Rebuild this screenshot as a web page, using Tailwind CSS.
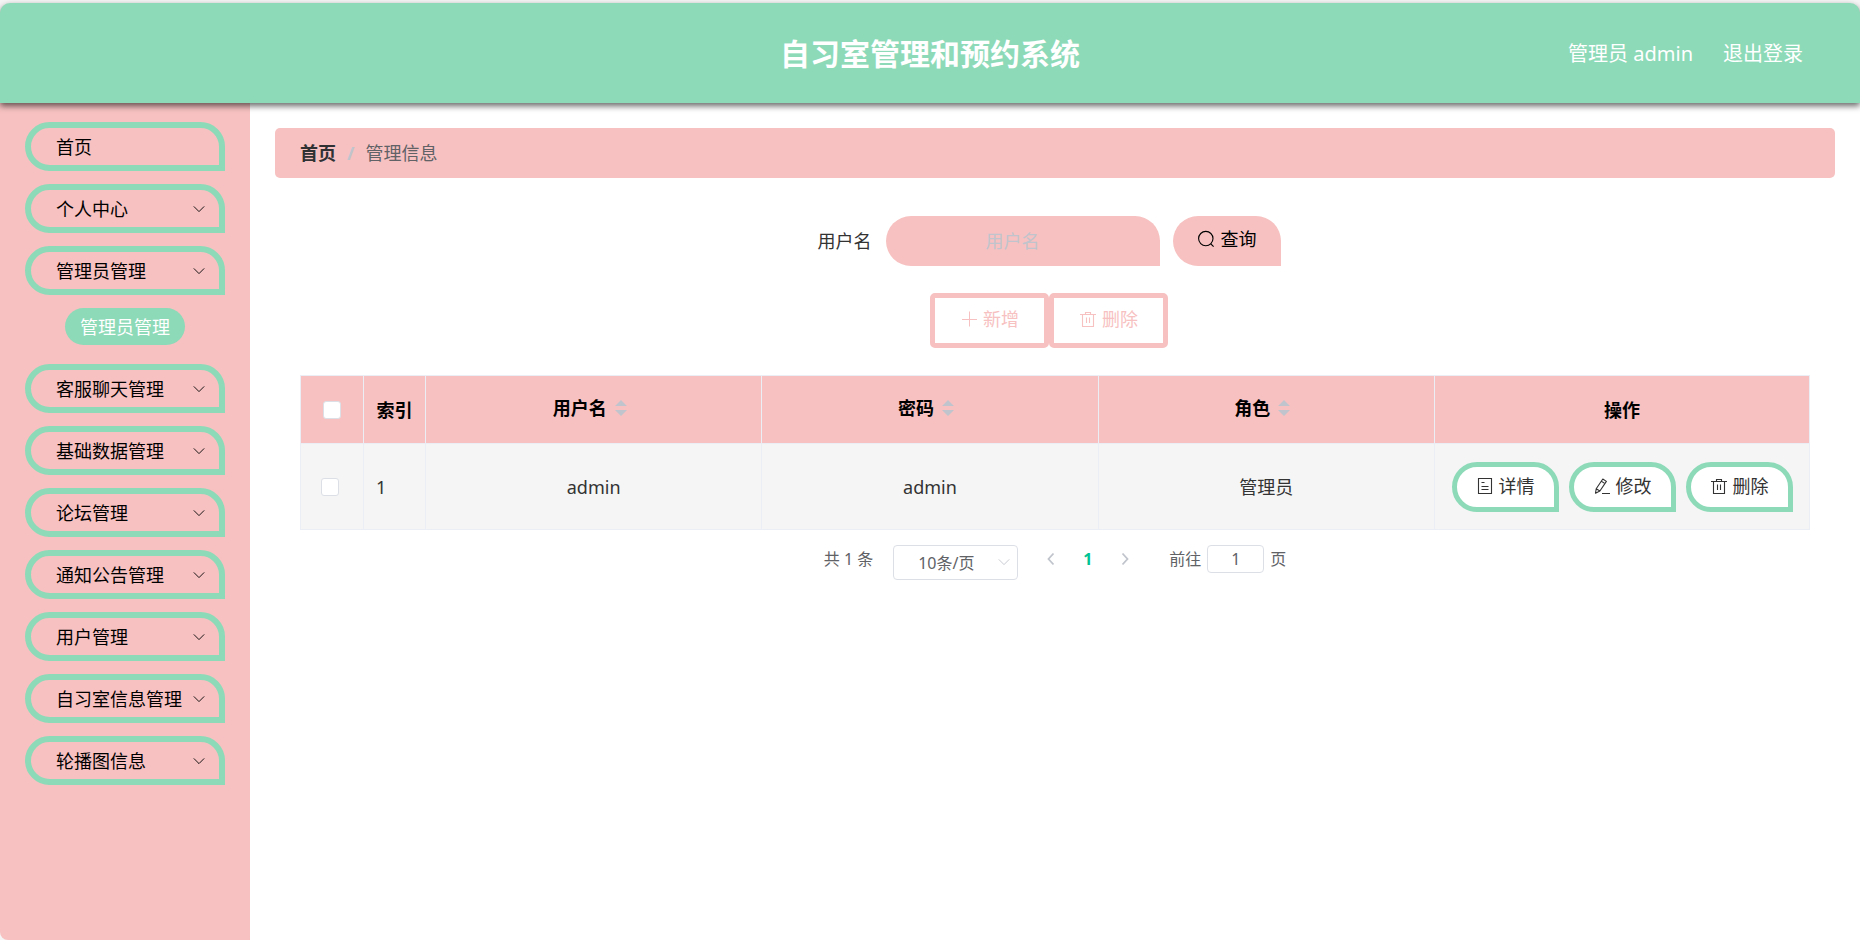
<!DOCTYPE html>
<html lang="zh-CN">

<head>
    <meta charset="UTF-8">
    <meta name="viewport" content="width=device-width, initial-scale=1.0">
    <title>自习室管理和预约系统</title>
    <script src="https://cdn.jsdelivr.net/npm/@tailwindcss/browser@4"></script>
</head>

<body class="bg-[#f5f5f5] font-['Noto_Sans','Noto_Sans_CJK_SC',sans-serif] text-[#333333]">
    <!-- Icons -->
    <svg class="hidden">
        <symbol id="arrow-down" viewBox="0 0 12 12">
            <path d="M0.8 3.4 L6 8.6 L11.2 3.4" fill="none" stroke="currentColor" stroke-width="0.9" />
        </symbol>
        <symbol id="search" viewBox="0 0 18 18">
            <circle cx="8.8" cy="8.6" r="7.2" fill="none" stroke="currentColor" stroke-width="1.1" />
            <path d="M13.8 13.8 L16.6 16.6" fill="none" stroke="currentColor" stroke-width="1.2" />
        </symbol>
        <symbol id="plus" viewBox="0 0 18 18">
            <path d="M9.5 1.5 V16.5 M2 9.5 H17" fill="none" stroke="currentColor" />
        </symbol>
        <symbol id="delete" viewBox="0 0 18 18">
            <path d="M1 4.5 H17 M6.5 4.5 V2.5 H11.5 V4.5 M3.5 4.5 V16.5 H14.5 V4.5 M7.5 7.5 V13 M10.5 7.5 V13" fill="none" stroke="currentColor" stroke-width="1.1" />
        </symbol>
        <symbol id="document" viewBox="0 0 18 18">
            <path d="M2.5 1.5 H15.5 V16.5 H2.5 Z M5.5 5.5 H8.5 M5.5 9.5 H12.5 M5.5 12.5 H12.5" fill="none" stroke="currentColor" stroke-width="1.1" />
        </symbol>
        <symbol id="edit" viewBox="0 0 18 18">
            <path d="M9.8 2 L13.4 4.4 L6.9 14 L2.5 16.2 L3.2 11.8 Z M8.4 4.2 L12 6.6 M3.2 11.8 L6.9 14 M9 16.5 H17" fill="none" stroke="currentColor" stroke-width="1.1" stroke-linejoin="round" />
        </symbol>
        <symbol id="carets" viewBox="0 0 12 16">
            <path d="M6 0 L12 6 H0 Z M0 10 H12 L6 16 Z" fill="currentColor" />
        </symbol>
    </svg>

    <div class="flex min-h-screen flex-col pt-[3px]">
        <header class="relative z-10 grid h-[100px] grid-cols-3 items-center rounded-t-[10px] bg-[#8ddab8] px-[57px] pt-0.5 text-xl text-white shadow-[0_3px_6px_rgba(0,0,0,0.6)]">
            <h1 class="col-start-2 text-center text-3xl font-bold">自习室管理和预约系统</h1>
            <div class="flex justify-end gap-[30px]">
                <span>管理员 admin</span>
                <a href="#">退出登录</a>
            </div>
        </header>

        <div class="flex grow">
            <!-- Sidebar -->
            <aside class="w-[250px] shrink-0 rounded-bl-lg bg-[#f7c1c1] px-[25px] pt-[19px]">
                <nav class="flex flex-col gap-[13px] text-lg text-black">
                    <a href="#" class="flex h-[49px] items-center rounded-[25px] rounded-br-none border-6 border-[#8ddab8] pl-[25px]">首页</a>
                    <button class="flex h-[49px] items-center justify-between rounded-[25px] rounded-br-none border-6 border-[#8ddab8] pr-3.5 pl-[25px]">个人中心<svg class="size-3"><use href="#arrow-down" /></svg></button>
                    <button class="flex h-[49px] items-center justify-between rounded-[25px] rounded-br-none border-6 border-[#8ddab8] pr-3.5 pl-[25px]">管理员管理<svg class="size-3"><use href="#arrow-down" /></svg></button>
                    <a href="#" class="mb-[6px] flex h-[37px] w-[120px] items-center justify-center self-center rounded-full bg-[#8ddab8] text-white">管理员管理</a>
                    <button class="flex h-[49px] items-center justify-between rounded-[25px] rounded-br-none border-6 border-[#8ddab8] pr-3.5 pl-[25px]">客服聊天管理<svg class="size-3"><use href="#arrow-down" /></svg></button>
                    <button class="flex h-[49px] items-center justify-between rounded-[25px] rounded-br-none border-6 border-[#8ddab8] pr-3.5 pl-[25px]">基础数据管理<svg class="size-3"><use href="#arrow-down" /></svg></button>
                    <button class="flex h-[49px] items-center justify-between rounded-[25px] rounded-br-none border-6 border-[#8ddab8] pr-3.5 pl-[25px]">论坛管理<svg class="size-3"><use href="#arrow-down" /></svg></button>
                    <button class="flex h-[49px] items-center justify-between rounded-[25px] rounded-br-none border-6 border-[#8ddab8] pr-3.5 pl-[25px]">通知公告管理<svg class="size-3"><use href="#arrow-down" /></svg></button>
                    <button class="flex h-[49px] items-center justify-between rounded-[25px] rounded-br-none border-6 border-[#8ddab8] pr-3.5 pl-[25px]">用户管理<svg class="size-3"><use href="#arrow-down" /></svg></button>
                    <button class="flex h-[49px] items-center justify-between rounded-[25px] rounded-br-none border-6 border-[#8ddab8] pr-3.5 pl-[25px]">自习室信息管理<svg class="size-3"><use href="#arrow-down" /></svg></button>
                    <button class="flex h-[49px] items-center justify-between rounded-[25px] rounded-br-none border-6 border-[#8ddab8] pr-3.5 pl-[25px]">轮播图信息<svg class="size-3"><use href="#arrow-down" /></svg></button>
                </nav>
            </aside>

            <main class="grow bg-white p-[25px] text-lg">
                <!-- Breadcrumb -->
                <nav class="flex h-[50px] items-center gap-[11px] rounded-[5px] bg-[#f7c1c1] px-[25px]">
                    <a href="#" class="font-bold text-[#303133]">首页</a>
                    <span class="font-bold text-[#c0c4cc]">/</span>
                    <span class="text-[#606266]">管理信息</span>
                </nav>

                <div class="px-[25px] pt-[38px]">
                    <!-- Search form -->
                    <form class="flex items-center justify-center pr-3">
                        <label for="username" class="mr-3.5">用户名</label>
                        <input type="text" id="username" placeholder="用户名" class="mr-[13px] h-[50px] w-[274px] rounded-[25px] rounded-br-none bg-[#f7c1c1] pr-[30px] pl-2.5 text-center outline-none placeholder:text-[#c0c4cc]">
                        <button type="button" class="flex h-[50px] items-center gap-1.5 rounded-[25px] rounded-br-none bg-[#f7c1c1] px-6 pb-1 text-black">
                            <svg class="size-[18px]"><use href="#search" /></svg>查询
                        </button>
                    </form>

                    <div class="mt-[27px] flex justify-center pr-3 text-[#f7c1c1]">
                        <button class="flex h-[55px] items-center gap-[5px] rounded-[5px] border-5 border-[#f7c1c1] px-[25px] pb-1">
                            <svg class="size-[18px]"><use href="#plus" /></svg>新增
                        </button>
                        <button class="flex h-[55px] items-center gap-[5px] rounded-[5px] border-5 border-[#f7c1c1] px-[25px] pb-1">
                            <svg class="size-[18px]"><use href="#delete" /></svg>删除
                        </button>
                    </div>

                    <!-- Admin table -->
                    <table class="mt-[27px] w-full table-fixed border-collapse border border-[#ebeef5]">
                        <colgroup>
                            <col class="w-[63px]">
                            <col class="w-[62px]">
                            <col>
                            <col>
                            <col>
                            <col class="w-[375px]">
                        </colgroup>
                        <thead class="bg-[#f7c1c1] text-black">
                            <tr class="h-[68px]">
                                <th class="border border-[#ebeef5]">
                                    <input type="checkbox" aria-label="全选" class="mx-auto block size-[18px] appearance-none rounded-[3px] border border-[#dcdfe6] bg-white">
                                </th>
                                <th class="border border-[#ebeef5]">索引</th>
                                <th class="border border-[#ebeef5]">
                                    <div class="flex items-center justify-center pb-1">用户名<span class="flex w-7 justify-center text-[#c0c4cc]"><svg class="h-4 w-3"><use href="#carets" /></svg></span></div>
                                </th>
                                <th class="border border-[#ebeef5]">
                                    <div class="flex items-center justify-center pb-1">密码<span class="flex w-7 justify-center text-[#c0c4cc]"><svg class="h-4 w-3"><use href="#carets" /></svg></span></div>
                                </th>
                                <th class="border border-[#ebeef5]">
                                    <div class="flex items-center justify-center pb-1">角色<span class="flex w-7 justify-center text-[#c0c4cc]"><svg class="h-4 w-3"><use href="#carets" /></svg></span></div>
                                </th>
                                <th class="border border-[#ebeef5]">操作</th>
                            </tr>
                        </thead>
                        <tbody class="bg-[#f5f5f5] text-center">
                            <tr class="h-[86px]">
                                <td class="border border-[#ebeef5] pl-5">
                                    <input type="checkbox" aria-label="选择 admin" class="block size-[18px] appearance-none rounded-[3px] border border-[#dcdfe6] bg-white">
                                </td>
                                <td class="border border-[#ebeef5] pl-3 text-left">1</td>
                                <td class="border border-[#ebeef5]">admin</td>
                                <td class="border border-[#ebeef5]">admin</td>
                                <td class="border border-[#ebeef5]">管理员</td>
                                <td class="border border-[#ebeef5]">
                                    <div class="flex justify-center gap-2.5">
                                        <button class="flex h-[50px] items-center gap-[5px] rounded-[25px] rounded-br-none border-5 border-[#8ddab8] bg-white px-[19px] pb-0.5">
                                            <svg class="size-[18px]"><use href="#document" /></svg>详情
                                        </button>
                                        <button class="flex h-[50px] items-center gap-[5px] rounded-[25px] rounded-br-none border-5 border-[#8ddab8] bg-white px-[19px] pb-0.5">
                                            <svg class="size-[18px]"><use href="#edit" /></svg>修改
                                        </button>
                                        <button class="flex h-[50px] items-center gap-[5px] rounded-[25px] rounded-br-none border-5 border-[#8ddab8] bg-white px-[19px] pb-0.5">
                                            <svg class="size-[18px]"><use href="#delete" /></svg>删除
                                        </button>
                                    </div>
                                </td>
                            </tr>
                        </tbody>
                    </table>

                    <!-- Pagination -->
                    <div class="mt-[15px] flex items-start justify-center text-base leading-7 text-[#606266]">
                        <span class="mr-5">共 1 条</span>
                        <div class="relative mr-3.5">
                            <select aria-label="每页条数" class="block h-[35px] w-[125px] appearance-none rounded-[4px] border border-[#dcdfe6] bg-white pl-6">
                                <option>10条/页</option>
                                <option>20条/页</option>
                                <option>50条/页</option>
                            </select>
                            <svg class="pointer-events-none absolute top-[11px] right-2 size-3 text-[#c0c4cc]"><use href="#arrow-down" /></svg>
                        </div>
                        <button aria-label="上一页" class="flex h-7 w-[37px] items-center justify-center text-[#c0c4cc]">
                            <svg class="size-3.5" viewBox="0 0 14 14"><path d="M9.5 1.5 L4.5 7 L9.5 12.5" fill="none" stroke="currentColor" stroke-width="1.8" /></svg>
                        </button>
                        <button class="h-7 w-[37px] font-bold text-[#00c292]">1</button>
                        <button aria-label="下一页" class="flex h-7 w-[37px] items-center justify-center text-[#c0c4cc]">
                            <svg class="size-3.5" viewBox="0 0 14 14"><path d="M4.5 1.5 L9.5 7 L4.5 12.5" fill="none" stroke="currentColor" stroke-width="1.8" /></svg>
                        </button>
                        <label for="page" class="ml-[26px]">前往</label>
                        <input type="text" id="page" value="1" class="mx-1.5 h-7 w-[57px] rounded-[4px] border border-[#dcdfe6] text-center">
                        <span>页</span>
                    </div>
                </div>
            </main>
        </div>
    </div>
</body>

</html>
